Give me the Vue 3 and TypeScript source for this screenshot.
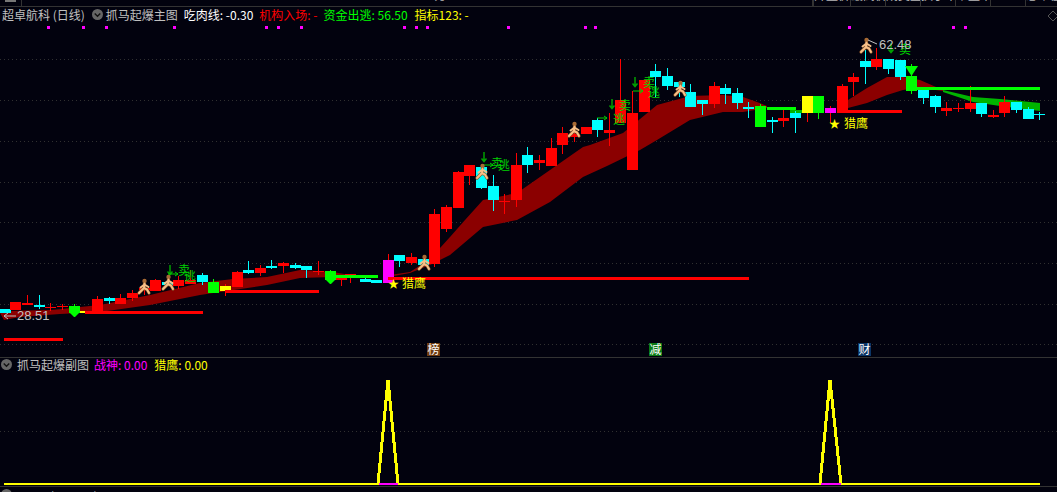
<script setup lang="ts">
type Candle = [number, number, number, number, number, string]

const R = '#ff0000'
const C = '#00ffff'
const G = '#00ff00'
const Y = '#ffff00'
const M = '#ff00ff'

// left, body top, body bottom, wick top, wick bottom, colour
const candles: Candle[] = [
  [0, 309, 313, 309, 313, C], [10, 302, 310, 302, 310, R], [22, 303, 305, 295, 305, R],
  [34, 305, 307, 295, 309, C], [45, 307, 308, 303, 311, R], [57, 306, 307, 304, 310, R],
  [69, 306, 313, 304, 313, G], [80, 311, 313, 311, 313, Y], [92, 299, 312, 296, 312, R],
  [104, 298, 301, 297, 304, C], [115, 298, 304, 294, 304, R], [127, 293, 298, 290, 301, R],
  [139, 288, 290, 288, 295, R], [150, 280, 291, 279, 291, R], [162, 282, 285, 282, 285, C],
  [173, 280, 286, 276, 289, R], [185, 280, 284, 270, 284, R], [197, 275, 282, 273, 285, C],
  [208, 282, 293, 279, 293, G], [220, 286, 291, 284, 296, Y], [232, 272, 287, 271, 287, R],
  [243, 270, 273, 261, 274, C], [255, 268, 273, 265, 276, R], [266, 266, 268, 260, 269, C],
  [278, 263, 266, 262, 273, R], [290, 265, 268, 263, 269, C], [301, 266, 270, 266, 278, C],
  [313, 271, 272, 261, 275, R], [325, 271, 280, 270, 280, G], [336, 278, 280, 278, 286, R],
  [345, 274, 276, 274, 283, R], [360, 279, 282, 278, 282, C], [371, 280, 283, 280, 283, C],
  [383, 260, 283, 254, 283, M], [394, 255, 261, 255, 267, C], [406, 257, 263, 253, 265, R],
  [418, 259, 265, 259, 265, C], [429, 214, 264, 209, 267, R], [441, 207, 229, 205, 232, R],
  [453, 172, 208, 171, 208, R], [464, 165, 176, 165, 185, R], [476, 167, 188, 167, 189, C],
  [488, 186, 200, 175, 211, C], [499, 201, 202, 194, 214, R], [511, 165, 200, 153, 207, R],
  [522, 155, 165, 147, 173, C], [534, 160, 163, 155, 170, R], [546, 148, 166, 138, 166, R],
  [557, 133, 145, 127, 154, R], [569, 134, 137, 122, 142, R], [581, 127, 134, 127, 134, R],
  [592, 120, 130, 118, 137, C], [604, 130, 133, 113, 146, R], [615, 100, 123, 59, 123, R],
  [627, 113, 170, 91, 170, R], [639, 80, 112, 80, 112, R], [650, 71, 77, 64, 97, C],
  [662, 76, 86, 68, 90, C], [674, 82, 87, 82, 97, C], [685, 92, 107, 84, 107, C],
  [697, 100, 104, 100, 115, C], [709, 86, 104, 82, 108, R], [720, 88, 94, 84, 104, C],
  [732, 93, 103, 88, 109, C], [743, 107, 109, 102, 118, C], [755, 106, 127, 104, 127, G],
  [767, 120, 122, 117, 133, C], [778, 118, 121, 110, 127, R], [790, 113, 118, 111, 133, C],
  [802, 96, 113, 96, 122, Y], [813, 96, 113, 96, 119, G], [825, 108, 113, 106, 123, M],
  [837, 86, 112, 84, 112, R], [848, 77, 82, 73, 96, R], [860, 61, 67, 50, 84, C],
  [871, 59, 67, 48, 70, R], [883, 59, 69, 59, 74, C], [895, 60, 77, 60, 80, C],
  [906, 76, 91, 64, 94, G], [918, 89, 98, 89, 104, C], [930, 96, 107, 95, 113, C],
  [941, 108, 111, 102, 116, R], [953, 108, 109, 103, 112, R], [965, 103, 109, 86, 112, R],
  [976, 103, 114, 103, 117, C], [988, 115, 117, 110, 118, R], [999, 102, 113, 96, 117, R],
  [1011, 102, 110, 102, 113, C], [1023, 109, 119, 107, 119, C], [1034, 114, 115, 112, 120, C],
]

const bands = [
  '0,313 4,311 50,310 62,309 80,307 100,305 150,295 200,283 233,279 267,277 300,270 333,272 350,275 350,277 333,277 300,278 267,285 200,295 150,305 100,312 60,314 20,317 4,320',
  '383,276 410,272 430,259 450,237 465,220 483,200 517,193 550,170 583,147 590,145 623,133 657,105 690,96 723,95 743,97 757,102 767,106 767,108 743,112 723,112 690,120 657,140 640,150 607,166 583,177 550,202 517,220 483,227 450,255 430,265 410,273 383,278',
  '848,100 867,88 887,77 903,77 920,80 943,90 943,91 920,88 903,90 887,95 867,103 848,108',
]

const hLines: [number, number, number, string][] = [
  [4, 63, 338, R], [85, 203, 311, R], [225, 319, 290, R], [388, 749, 277, R], [837, 902, 110, R],
  [336, 378, 275, G], [767, 796, 107, G], [917, 1040, 87, G],
]

const gridLines = [59, 100, 141, 182, 222, 263, 304, 344]
const topDots = [47, 82, 105, 173, 265, 277, 300, 403, 415, 426, 507, 584, 594, 848, 952, 964]
const runners = [[138, 279], [162, 275], [418, 255], [476, 164], [568, 122], [674, 81], [860, 38]]
const eagles = [[390, 288, 402], [831, 128, 844]]

const sellMarks = [
  { arrowX: 170, arrowY: 265, sellX: 178, sellY: 275 },
  { arrowX: 484, arrowY: 152, sellX: 491, sellY: 168 },
  { arrowX: 612, arrowY: 99, sellX: 619, sellY: 110 },
  { arrowX: 635, arrowY: 77, sellX: 643, sellY: 87 },
  { arrowX: 891, arrowY: 43, sellX: 899, sellY: 54 },
]
const escapeMarks = [
  { lineX: 168, lineY: 274, textX: 184, textY: 281 },
  { lineX: 483, lineY: 165, textX: 498, textY: 170 },
  { lineX: 597, lineY: 118, textX: 613, textY: 124 },
  { lineX: 633, lineY: 91, textX: 648, textY: 97 },
]

const badges = [
  { x: 427, text: '榜', bg: '#6f3c10' },
  { x: 649, text: '减', bg: '#0a7a14' },
  { x: 858, text: '财', bg: '#0b3566' },
]

const leftTabs = ['9.38', '10.25', '11.04', '8.76', '9.62', '12.50', '7.18', '+3.26%', '1.25万', '6.30']
const rightTabs = ['开盘价格', '最高价格', '成交量', '换手率', '市盈率', '', '总市值']
</script>

<template>
  <div class="screen">
    <div class="top-bar">
      <div class="top-left">
        <span class="top-block"></span>
      </div>
      <div class="top-values">
        <span v-for="(tab, i) in leftTabs" :key="i" :class="{ lime: i === 7 }">{{ tab }}</span>
      </div>
      <div class="top-tabs">
        <div v-for="(tab, i) in rightTabs" :key="i" class="top-tab">
          <span>{{ tab }}</span>
        </div>
      </div>
    </div>

    <div class="main-panel">
      <div class="panel-head">
        <span class="grey">超卓航科 (日线)</span>
        <span class="toggle"><svg viewBox="0 0 12 12"><path d="M3 5l3 3 3-3" /></svg></span>
        <span class="grey name">抓马起爆主图</span>
        <span class="white">吃肉线: -0.30</span>
        <span class="red">机构入场: -</span>
        <span class="green">资金出逃: 56.50</span>
        <span class="yellow wide">指标123: -</span>
      </div>
      <svg class="diamond" viewBox="0 0 12 12"><path d="M6 1l5 5-5 5-5-5z" /></svg>

      <svg class="chart" viewBox="0 7 1057 350" width="1057" height="350">
        <line v-for="y in gridLines" :key="y" class="grid" x1="0" x2="1057" :y1="y + 0.5" :y2="y + 0.5" />
        <rect v-for="x in topDots" :key="x" class="crisp" :x="x" y="26" width="3" height="3" :fill="M" />

        <polygon v-for="(b, i) in bands" :key="i" :points="b" fill="#8b0000" />
        <polygon points="943,90 973,97 1000,99 1040,103 1040,111 1000,106 973,102 943,92" fill="#00b400" />
        <polygon points="790,110 804,110 804,113 790,113" fill="#00b400" />

        <g v-for="(c, i) in candles" :key="i">
          <rect class="crisp" :x="c[0] + 5" :y="c[3]" width="1" :height="c[4] - c[3]"
            :fill="c[5] === Y || c[5] === M ? R : c[5]" />
          <rect class="crisp" :x="c[0]" :y="c[1]" width="11" :height="c[2] - c[1]" :fill="c[5]" />
        </g>

        <rect v-for="(l, i) in hLines" :key="i" class="crisp" :x="l[0]" :y="l[2]" :width="l[1] - l[0]" height="3" :fill="l[3]" />

        <polygon :fill="G" points="70,313 79,313 75,317 74,317" />
        <polygon :fill="G" points="326,280 335,280 331,284 330,284" />
        <polygon :fill="G" points="905,66 918,66 911.5,76" />

        <g v-for="(m, i) in sellMarks" :key="'s' + i">
          <path class="down-arrow" :d="`M${m.arrowX} ${m.arrowY}v9m-2.5-2.5l2.5 3 2.5-3`" />
          <text class="mark" :x="m.sellX" :y="m.sellY">卖</text>
        </g>
        <g v-for="(m, i) in escapeMarks" :key="'e' + i">
          <path class="right-arrow" :d="`M${m.lineX} ${m.lineY}h10m-3-2l3 2-3 2`" />
          <text class="mark" :x="m.textX" :y="m.textY">逃</text>
        </g>

        <g v-for="(r, i) in runners" :key="'r' + i" :transform="`translate(${r[0]} ${r[1]})`">
          <circle class="runner-head" cx="6.5" cy="2" r="2.2" />
          <path class="runner-shadow" d="M6.5 4.5L6 9L1 14M6 9l3 1.5 2 3.5" />
          <path class="runner-body" d="M6.5 4.5L6 9L1 14M6 9l3 1.5 2 3.5M6.5 5.5L2.5 8.5M6.5 5.5l4 2.5" />
        </g>

        <path class="price-arrow" d="M4 316h12M4 316l4-3M4 316l4 3" />
        <text class="price" x="17" y="320">28.51</text>
        <path class="price-arrow" d="M868 40l9 4" />
        <text class="price" x="879" y="49">62.48</text>

        <g v-for="(e, i) in eagles" :key="'g' + i">
          <text class="star" :x="e[0] - 2" :y="e[1]">★</text>
          <text class="eagle" :x="e[2]" :y="e[1]">猎鹰</text>
        </g>

        <g v-for="b in badges" :key="b.x">
          <rect class="crisp" :x="b.x" y="343" width="13" height="13" :fill="b.bg" />
          <text class="badge-text" :x="b.x + 0.5" y="354">{{ b.text }}</text>
        </g>
      </svg>
    </div>

    <div class="sub-panel">
      <div class="panel-head">
        <span class="toggle first"><svg viewBox="0 0 12 12"><path d="M3 5l3 3 3-3" /></svg></span>
        <span class="grey">抓马起爆副图</span>
        <span class="magenta">战神: 0.00</span>
        <span class="yellow wide">猎鹰: 0.00</span>
      </div>
      <svg class="chart" viewBox="0 358 1057 128" width="1057" height="128">
        <line class="grid" x1="0" x2="1057" y1="431.5" y2="431.5" />
        <rect class="crisp" x="4" y="483" width="1036" height="2" :fill="Y" />
        <polyline class="signal" points="378,484 388,380 398,484" />
        <polyline class="signal" points="820,484 830,380 841,484" />
        <rect class="crisp" x="379" y="483" width="19" height="2" :fill="M" />
        <rect class="crisp" x="821" y="483" width="20" height="2" :fill="M" />
      </svg>
    </div>

    <div class="bottom-panel">
      <span class="toggle first"></span>
      <span class="grey">MACD(12,26,9)</span>
      <span class="white">DIF: 0.09</span>
      <span class="yellow">DEA: 0.66</span>
      <span class="magenta">MACD: -1.16</span>
    </div>
  </div>
</template>

<style>
body {
  background: #02020e;
}
</style>

<style scoped>
.screen {
  width: 1057px;
  height: 492px;
  display: flex;
  flex-direction: column;
  overflow: hidden;
  background: #02020e;
  font-family: "Noto Sans CJK SC", "Liberation Sans", sans-serif;
  font-size: 12px;
}

.top-bar {
  height: 6px;
  flex: none;
  display: flex;
  border-bottom: 1px solid #333;
  overflow: hidden;
  color: #b8b8b8;
  line-height: 14px;
}

.top-left {
  width: 22px;
  flex: none;
  border-right: 1px solid #333;
  padding-left: 5px;
  box-sizing: border-box;
}

.top-block {
  display: block;
  width: 11px;
  height: 2px;
  background: #777;
}

.top-values {
  display: flex;
  gap: 20px;
  margin: -12px 0 0 5px;
  width: 785px;
  flex: none;
  white-space: nowrap;
}

.top-values .lime {
  color: #b0d800;
}

.top-tabs {
  display: flex;
  border-left: 2px solid #333;
  white-space: nowrap;
}

.top-tab {
  width: 34px;
  flex: none;
  height: 6px;
  border-right: 1px solid #333;
  overflow: hidden;
  text-align: center;
}

.top-tab:first-child {
  width: 36px;
}

.top-tab span {
  display: block;
  margin-top: -12px;
}

.main-panel {
  position: relative;
  height: 350px;
  flex: none;
  border-bottom: 1px solid #333;
}

.sub-panel {
  position: relative;
  height: 128px;
  flex: none;
  border-bottom: 1px solid #333;
}

.panel-head {
  position: absolute;
  left: 2px;
  top: -1px;
  height: 17px;
  display: flex;
  align-items: center;
  gap: 6px;
  white-space: nowrap;
  line-height: 17px;
  z-index: 1;
}

.sub-panel .panel-head {
  left: 1px;
  gap: 5px;
  height: 14px;
}

.toggle {
  width: 11px;
  height: 11px;
  border-radius: 50%;
  background: #666;
  flex: none;
  margin-left: 1px;
}

.toggle.first {
  margin-left: 0;
}

.toggle svg {
  display: block;
  width: 11px;
  height: 11px;
}

.toggle path {
  fill: none;
  stroke: #111;
  stroke-width: 1.5;
}

.name {
  margin-left: -3px;
}

.wide {
  margin-left: 1px;
}

.sub-panel .wide {
  margin-left: 2px;
}

.grey {
  color: #c0c0c0;
}

.white {
  color: #fff;
}

.red {
  color: #ff0000;
}

.green {
  color: #00ff00;
}

.yellow {
  color: #ffff00;
}

.magenta {
  color: #ff00ff;
}

.diamond {
  position: absolute;
  right: -2px;
  top: 3px;
  width: 12px;
  height: 12px;
  z-index: 1;
}

.diamond path {
  fill: none;
  stroke: #555;
}

.chart {
  display: block;
}

.crisp {
  shape-rendering: crispEdges;
}

.grid {
  stroke: #303030;
  stroke-width: 1;
  stroke-dasharray: 1 3;
  shape-rendering: crispEdges;
}

.down-arrow {
  fill: none;
  stroke: #00a000;
  stroke-width: 1.5;
}

.right-arrow {
  fill: none;
  stroke: #00d000;
  stroke-width: 1;
}

.mark {
  fill: #00d000;
  font-size: 12px;
}

.runner-head {
  fill: #a86a34;
}

.runner-shadow {
  fill: none;
  stroke: #8a5428;
  stroke-width: 3.2;
  stroke-linecap: round;
}

.runner-body {
  fill: none;
  stroke: #f8c088;
  stroke-width: 2;
  stroke-linecap: round;
}

.price-arrow {
  fill: none;
  stroke: #c0c0c0;
  stroke-width: 1;
}

.price {
  fill: #c0c0c0;
  font-family: "Liberation Sans", sans-serif;
  font-size: 13px;
}

.star {
  fill: #ffff00;
  font-size: 11px;
}

.eagle {
  fill: #ffff00;
  font-size: 12px;
}

.badge-text {
  fill: #fff;
  font-size: 12px;
}

.signal {
  fill: none;
  stroke: #ffff00;
  stroke-width: 3;
  stroke-linejoin: miter;
  shape-rendering: crispEdges;
}

.bottom-panel {
  display: flex;
  align-items: flex-start;
  gap: 6px;
  padding-left: 1px;
  padding-top: 2px;
  line-height: 14px;
  white-space: nowrap;
}

.bottom-panel .first {
  margin-right: -1px;
}
</style>
